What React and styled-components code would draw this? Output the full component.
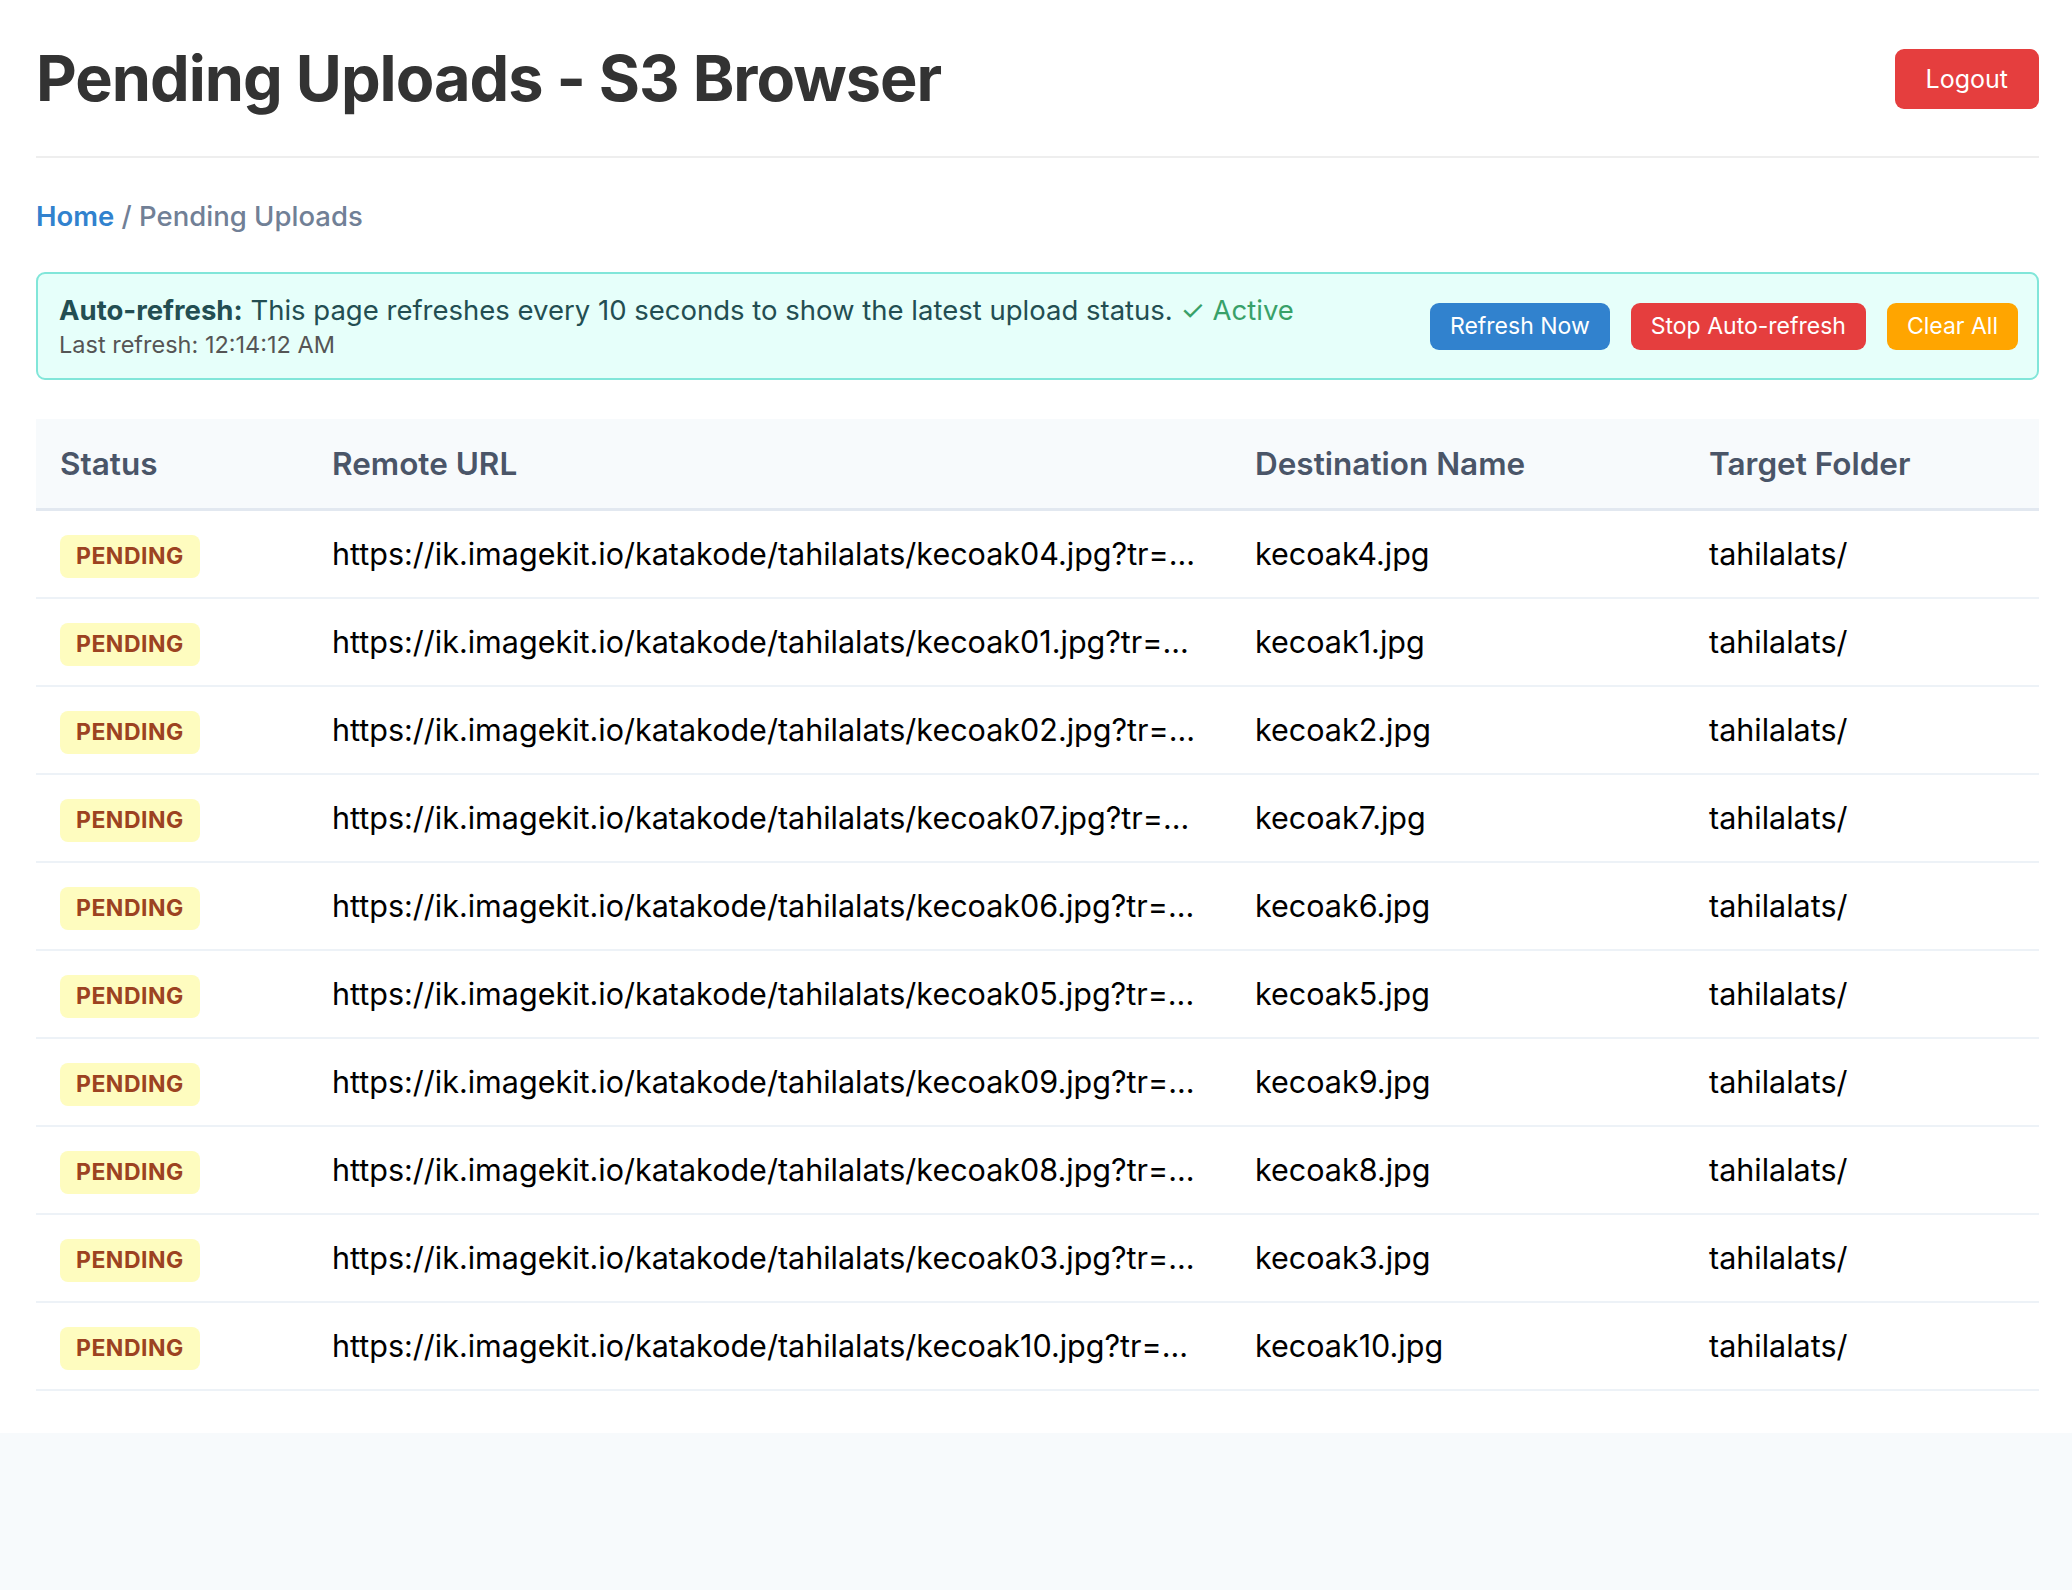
import React from 'react';
import styled, { createGlobalStyle } from 'styled-components';

const GlobalStyle = createGlobalStyle`
  body {
    margin: 0;
    background: #f7fafc;
    font-family: Inter, "Liberation Sans", sans-serif;
  }
`;

const Page = styled.div`
  background: #fff;
  padding: 0 33px 42px 36px;
`;

const Header = styled.header`
  display: flex;
  justify-content: space-between;
  align-items: center;
  padding: 40px 0 39px;
  border-bottom: 2px solid #eee;
`;

const Title = styled.h1`
  margin: 0;
  font-size: 63px;
  line-height: 77px;
  font-weight: 700;
  letter-spacing: -1px;
  color: #333;
`;

const Button = styled.button`
  border: none;
  border-radius: 9px;
  color: #fff;
  font-family: inherit;
  font-size: ${(p) => (p.big ? '25px' : '23px')};
  padding: ${(p) => (p.big ? '0 31px' : '0 20px')};
  height: ${(p) => (p.big ? '60px' : '47px')};
  background: ${(p) => p.bg};
  cursor: pointer;
`;

const Crumbs = styled.nav`
  margin: 38px 0 36px;
  font-size: 27.5px;
  line-height: 40px;
  font-weight: 500;
  color: #718096;
`;

const CrumbLink = styled.a`
  color: #3182ce;
  font-weight: 600;
  text-decoration: none;
`;

const Notice = styled.div`
  display: flex;
  align-items: center;
  justify-content: space-between;
  background: #e6fffa;
  border: 2px solid #81e6d9;
  border-radius: 9px;
  padding: 18px 19px 18px 21px;
`;

const NoticeText = styled.div`
  color: #234e52;
  font-size: 27.5px;
  line-height: 36px;
`;

const Active = styled.span`
  color: #38a169;
`;

const LastRefresh = styled.div`
  margin-top: 2px;
  font-size: 23.5px;
  line-height: 30px;
  color: #555;
`;

const Actions = styled.div`
  display: flex;
  gap: 21px;
`;

const Table = styled.table`
  width: 100%;
  margin-top: 39px;
  border-collapse: collapse;
  table-layout: fixed;
`;

const Th = styled.th`
  text-align: left;
  background: #f7fafc;
  color: #4a5568;
  font-size: 31.5px;
  font-weight: 600;
  line-height: 40px;
  padding: 25px 24px 24px;
  border-bottom: 3px solid #e2e8f0;
`;

const Td = styled.td`
  color: #000;
  font-size: 30.5px;
  line-height: 44px;
  padding: 21px 24px;
  border-bottom: 2px solid #edf2f7;
  white-space: nowrap;
  overflow: hidden;
`;

const Badge = styled.span`
  display: inline-block;
  vertical-align: top;
  margin: 3px 0 -2px;
  background: #fefcbf;
  color: #9c4221;
  font-size: 23px;
  font-weight: 700;
  line-height: 43px;
  padding: 0 16px;
  border-radius: 8px;
  letter-spacing: 0.5px;
`;

const uploads = [
  ['04', 'kecoak4.jpg'],
  ['01', 'kecoak1.jpg'],
  ['02', 'kecoak2.jpg'],
  ['07', 'kecoak7.jpg'],
  ['06', 'kecoak6.jpg'],
  ['05', 'kecoak5.jpg'],
  ['09', 'kecoak9.jpg'],
  ['08', 'kecoak8.jpg'],
  ['03', 'kecoak3.jpg'],
  ['10', 'kecoak10.jpg'],
];

const App = () => (
  <>
    <GlobalStyle />
    <Page>
      <Header>
        <Title>Pending Uploads - S3 Browser</Title>
        <Button big bg="#e53e3e">Logout</Button>
      </Header>
      <Crumbs>
        <CrumbLink href="#">Home</CrumbLink> / Pending Uploads
      </Crumbs>
      <Notice>
        <div>
          <NoticeText>
            <strong>Auto-refresh:</strong> This page refreshes every 10 seconds to show the latest upload status.{' '}
            <Active>✓ Active</Active>
          </NoticeText>
          <LastRefresh>Last refresh: 12:14:12 AM</LastRefresh>
        </div>
        <Actions>
          <Button bg="#3182ce">Refresh Now</Button>
          <Button bg="#e53e3e">Stop Auto-refresh</Button>
          <Button bg="#ffa500">Clear All</Button>
        </Actions>
      </Notice>
      <Table>
        <colgroup>
          <col style={{ width: 272 }} />
          <col style={{ width: 923 }} />
          <col style={{ width: 454 }} />
          <col />
        </colgroup>
        <thead>
          <tr>
            <Th>Status</Th>
            <Th>Remote URL</Th>
            <Th>Destination Name</Th>
            <Th>Target Folder</Th>
          </tr>
        </thead>
        <tbody>
          {uploads.map(([n, name]) => (
            <tr key={n}>
              <Td><Badge>PENDING</Badge></Td>
              <Td>{`https://ik.imagekit.io/katakode/tahilalats/kecoak${n}.jpg?tr=...`}</Td>
              <Td>{name}</Td>
              <Td>tahilalats/</Td>
            </tr>
          ))}
        </tbody>
      </Table>
    </Page>
  </>
);

export default App;
